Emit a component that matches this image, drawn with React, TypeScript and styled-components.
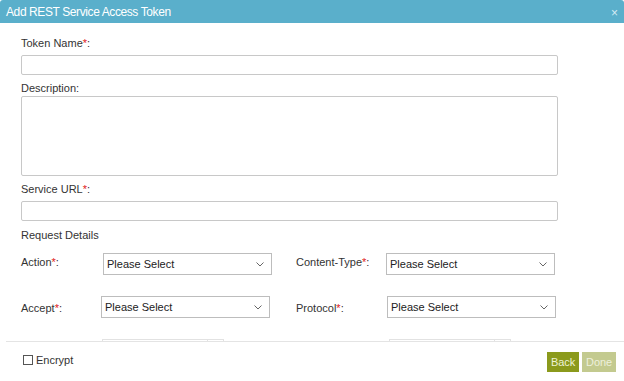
import React from "react";
import styled, { createGlobalStyle } from "styled-components";

const Global = createGlobalStyle`
  html, body { margin: 0; padding: 0; background: #fff; }
  body { font-family: "Liberation Sans", Arial, sans-serif; }
  * { box-sizing: border-box; }
`;

const Dialog = styled.div`
  width: 624px;
  height: 381px;
  display: flex;
  flex-direction: column;
  background: #fff;
  overflow: hidden;
`;

const Header = styled.div`
  height: 23px;
  flex: none;
  background: #5aafcb;
  border-radius: 3px 3px 0 0;
  display: flex;
  align-items: center;
  justify-content: space-between;
  padding: 0 6px 0 6px;
`;

const Title = styled.div`
  color: #fff;
  font-size: 12px;
  letter-spacing: -0.4px;
`;

const Close = styled.div`
  color: #d4ecf4;
  font-size: 12px;
  line-height: 1;
  margin-top: 3px;
`;

const Body = styled.div`
  height: 318px;
  flex: none;
  overflow: hidden;
  padding: 14px 0 0 21px;
`;

const Label = styled.div<{ $mt?: number }>`
  font-size: 11px;
  line-height: 12px;
  color: #333;
  margin-top: ${(p) => p.$mt ?? 0}px;
  white-space: nowrap;
`;

const Req = styled.span`
  color: #e02020;
`;

const TextInput = styled.div<{ $h?: number; $mt?: number }>`
  width: 537px;
  height: ${(p) => p.$h ?? 20}px;
  margin-top: ${(p) => p.$mt ?? 6}px;
  border: 1px solid #c8c8c8;
  border-radius: 2px;
  background: #fff;
`;

const Grid = styled.div`
  margin-top: 12px;
  display: grid;
  grid-template-columns: 81px 170px 24px 90px 170px;
  row-gap: 21px;
  align-items: start;
`;

const FieldLabel = styled(Label)<{ $pt?: number }>`
  padding-top: ${(p) => p.$pt ?? 3}px;
`;

const Select = styled.div<{ $dx?: number }>`
  height: 22px;
  width: 169px;
  margin-left: ${(p) => p.$dx ?? 0}px;
  border: 1px solid #bdbdbd;
  display: flex;
  align-items: center;
  justify-content: space-between;
  padding: 0 7px 0 3px;
  font-size: 11px;
  color: #222;
  background: #fff;
`;

const Stub = styled.div<{ $dx?: number }>`
  height: 22px;
  margin-left: ${(p) => p.$dx ?? 0}px;
  display: flex;
`;

const StubMain = styled.div`
  width: 105px;
  height: 22px;
  border: 1px solid #e2e2e2;
  border-right: none;
`;

const StubBtn = styled.div`
  width: 17px;
  height: 22px;
  border: 1px solid #e2e2e2;
`;

const Footer = styled.div`
  flex: 1;
  margin-left: 6px;
  border-top: 1px solid #e4e4e4;
  display: flex;
  align-items: flex-start;
  justify-content: space-between;
  padding: 10px 8px 0 17px;
`;

const Encrypt = styled.label`
  display: flex;
  align-items: center;
  gap: 3px;
  font-size: 11px;
  color: #333;
  margin-top: 2px;
`;

const Box = styled.span`
  width: 10px;
  height: 10px;
  border: 1px solid #555;
  background: #fff;
  display: inline-block;
`;

const Buttons = styled.div`
  display: flex;
  gap: 3px;
`;

const Btn = styled.div<{ $disabled?: boolean }>`
  height: 20px;
  padding: 0 4px;
  display: flex;
  align-items: center;
  font-size: 11px;
  letter-spacing: -0.1px;
  color: ${(p) => (p.$disabled ? "#eef0dc" : "#eef2d6")};
  background: ${(p) => (p.$disabled ? "#c3ca8f" : "#8b9a1c")};
`;

const Chevron = () => (
  <svg width="8" height="5" viewBox="0 0 8 5">
    <path d="M0.5 0.5 L4 4 L7.5 0.5" fill="none" stroke="#666" strokeWidth="1" />
  </svg>
);

export default function App() {
  return (
    <>
      <Global />
      <Dialog>
        <Header>
          <Title>Add REST Service Access Token</Title>
          <Close>×</Close>
        </Header>
        <Body>
          <Label>
            Token Name<Req>*</Req>:
          </Label>
          <TextInput />
          <Label $mt={7}>Description:</Label>
          <TextInput $h={80} $mt={2} />
          <Label $mt={7}>
            Service URL<Req>*</Req>:
          </Label>
          <TextInput />
          <Label $mt={8}>Request Details</Label>
          <Grid>
            <FieldLabel>
              Action<Req>*</Req>:
            </FieldLabel>
            <Select $dx={1}>
              Please Select <Chevron />
            </Select>
            <span />
            <FieldLabel>
              Content-Type<Req>*</Req>:
            </FieldLabel>
            <Select>
              Please Select <Chevron />
            </Select>

            <FieldLabel $pt={6}>
              Accept<Req>*</Req>:
            </FieldLabel>
            <Select $dx={-1}>
              Please Select <Chevron />
            </Select>
            <span />
            <FieldLabel $pt={6}>
              Protocol<Req>*</Req>:
            </FieldLabel>
            <Select $dx={1}>
              Please Select <Chevron />
            </Select>

            <span />
            <Stub>
              <StubMain />
              <StubBtn />
            </Stub>
            <span />
            <span />
            <Stub $dx={3}>
              <StubMain />
              <StubBtn />
            </Stub>
          </Grid>
        </Body>
        <Footer>
          <Encrypt>
            <Box />
            Encrypt
          </Encrypt>
          <Buttons>
            <Btn>Back</Btn>
            <Btn $disabled>Done</Btn>
          </Buttons>
        </Footer>
      </Dialog>
    </>
  );
}
